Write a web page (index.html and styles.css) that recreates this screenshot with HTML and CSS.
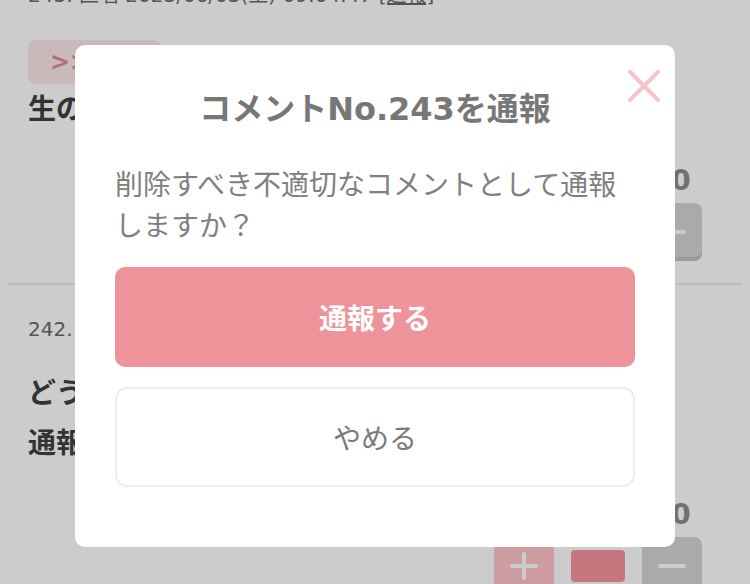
FILE: index.html
```html
<!DOCTYPE html>
<html lang="ja">
<head>
<meta charset="utf-8">
<title>コメント通報</title>
<link rel="stylesheet" href="styles.css">
</head>
<body>
<main class="page">
  <article class="comment">
    <div class="meta">243. 匿名 2023/06/03(土) 09:04:47 <a class="report">[通報]</a></div>
    <div class="anchor">&gt;&gt;242</div>
    <p class="text">生のままが一番おいしい</p>
    <div class="votes">
      <span class="count">0</span>
      <span class="count spacer"></span>
      <span class="count">0</span>
      <button class="vote plus" type="button"><svg width="30" height="30" viewBox="0 0 30 30"><path d="M15 3v24M3 15h24" stroke="#fff" stroke-width="4" stroke-linecap="round"/></svg></button>
      <span class="bar"></span>
      <button class="vote minus" type="button"><svg width="30" height="30" viewBox="0 0 30 30"><path d="M3 15h24" stroke="#fff" stroke-width="4" stroke-linecap="round"/></svg></button>
    </div>
  </article>
  <article class="comment">
    <div class="meta">242. 匿名 2023/06/03(土) 09:01:12 <a class="report">[通報]</a></div>
    <p class="text second">どうしてこうなった<br>通報しておきました</p>
    <div class="votes">
      <span class="count">0</span>
      <span class="count spacer"></span>
      <span class="count">0</span>
      <button class="vote plus" type="button"><svg width="30" height="30" viewBox="0 0 30 30"><path d="M15 3v24M3 15h24" stroke="#fff" stroke-width="4" stroke-linecap="round"/></svg></button>
      <span class="bar"></span>
      <button class="vote minus" type="button"><svg width="30" height="30" viewBox="0 0 30 30"><path d="M3 15h24" stroke="#fff" stroke-width="4" stroke-linecap="round"/></svg></button>
    </div>
  </article>
</main>
<div class="overlay"></div>
<section class="modal" role="dialog">
  <button class="close" type="button" aria-label="閉じる"><svg width="34" height="34" viewBox="0 0 34 34"><path d="M3 3L31 31M31 3L3 31" stroke="#f7c4c9" stroke-width="4" stroke-linecap="round"/></svg></button>
  <h2 class="modal-title">コメントNo.243を通報</h2>
  <p class="modal-text">削除すべき不適切なコメントとして通報しますか？</p>
  <button class="btn btn-primary" type="button">通報する</button>
  <button class="btn btn-secondary" type="button">やめる</button>
</section>
</body>
</html>
```
FILE: styles.css
```css
* { box-sizing: border-box; }
html, body { margin: 0; padding: 0; }
body {
  width: 750px;
  height: 584px;
  overflow: hidden;
  background: #fff;
  font-family: "DejaVu Sans", "Noto Sans CJK JP", sans-serif;
  color: #404040;
}
.page {
  margin-top: -49px;
  display: flex;
  flex-direction: column;
}
.comment {
  margin: 0 8px;
  padding: 28px 40px 22px 20px;
  border-bottom: 2px solid #ebebeb;
  display: flex;
  flex-direction: column;
  align-items: flex-start;
}
.meta {
  font-size: 20px;
  line-height: 32px;
  color: #6a6a6a;
  white-space: nowrap;
}
.report { color: #6a6a6a; text-decoration: underline; }
.anchor {
  margin-top: 29px;
  height: 44px;
  min-width: 132px;
  padding: 0 22px;
  border-radius: 8px;
  background: #fce8ea;
  color: #e58993;
  font-size: 24px;
  font-weight: 700;
  line-height: 44px;
}
.text {
  margin: 1px 0 0;
  font-size: 28px;
  font-weight: 700;
  line-height: 50px;
  color: #404040;
}
.text.second { margin-top: 24px; }
.votes {
  align-self: flex-end;
  margin-top: 30px;
  display: grid;
  grid-template-columns: 60px 54px 60px;
  grid-template-rows: 32px 58px;
  column-gap: 17px;
  row-gap: 6px;
}
.count {
  padding-left: 18px;
  text-align: center;
  font-size: 28px;
  font-weight: 700;
  line-height: 32px;
  color: #8c8c8c;
}
.vote {
  width: 60px;
  height: 58px;
  border: 0;
  padding: 0;
  border-radius: 8px;
  display: flex;
  align-items: center;
  justify-content: center;
}
.plus { background: #ffc3c9; }
.minus { background: #d5d5d5; box-shadow: inset 0 -4px 0 #c2c2c2; }
.bar {
  align-self: center;
  height: 32px;
  border-radius: 4px;
  background: #f8959e;
}
.overlay {
  position: fixed;
  inset: 0;
  background: rgba(0, 0, 0, 0.2);
}
.modal {
  position: fixed;
  top: 45px;
  left: 75px;
  width: 600px;
  padding: 41px 40px 60px;
  background: #fff;
  border-radius: 10px;
  display: flex;
  flex-direction: column;
}
.close {
  position: absolute;
  top: 24px;
  right: 14px;
  width: 34px;
  height: 34px;
  padding: 0;
  border: 0;
  background: none;
}
.close svg { display: block; }
.modal-title {
  margin: 0;
  text-align: center;
  font-size: 32px;
  font-weight: 700;
  line-height: 46px;
  color: #777;
}
.modal-text {
  margin: 33px 0 0;
  font-size: 28px;
  line-height: 41px;
  color: #808080;
}
.btn {
  height: 100px;
  border-radius: 10px;
  font-family: inherit;
  font-size: 28px;
  padding: 0;
}
.btn-primary {
  margin-top: 20px;
  border: 0;
  background: #ee9399;
  color: #fff;
  font-weight: 700;
}
.btn-secondary {
  margin-top: 20px;
  border: 2px solid #eeeeee;
  border-radius: 12px;
  background: #fff;
  color: #7a7a7a;
}
```
